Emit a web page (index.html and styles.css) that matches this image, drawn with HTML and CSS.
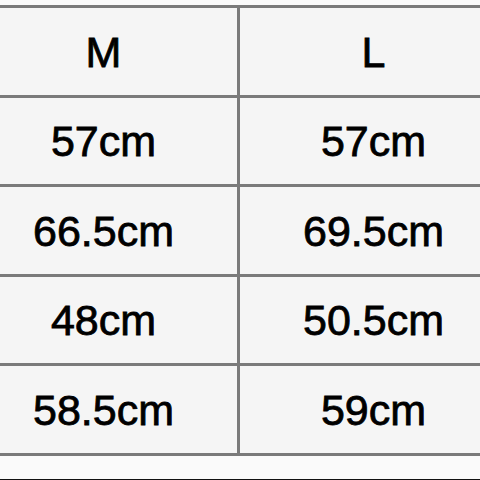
FILE: index.html
```html
<!DOCTYPE html>
<html>
<head>
<meta charset="utf-8">
<link rel="stylesheet" href="styles.css">
</head>
<body>
<div class="page">
  <div class="size-table">
    <div class="cell">M</div><div class="cell">L</div>
    <div class="cell">57cm</div><div class="cell">57cm</div>
    <div class="cell">66.5cm</div><div class="cell">69.5cm</div>
    <div class="cell">48cm</div><div class="cell">50.5cm</div>
    <div class="cell">58.5cm</div><div class="cell">59cm</div>
  </div>
</div>
</body>
</html>
```
FILE: styles.css
```css
html, body {
  margin: 0;
  padding: 0;
  background: #fafafa;
  overflow: hidden;
}
.page {
  width: 480px;
  height: 480px;
  box-sizing: border-box;
  border-bottom: 1px solid #111;
  padding-top: 5px;
  overflow: hidden;
  background: #fafafa;
}
.size-table {
  display: grid;
  grid-template-columns: 267px 267px;
  grid-auto-rows: 86.5px;
  gap: 3px;
  padding: 3px;
  margin-left: -33px;
  width: max-content;
  background: #7a7a7a;
}
.cell {
  background: #f5f5f5;
  display: flex;
  align-items: center;
  justify-content: center;
  font-family: "Liberation Sans", Arial, sans-serif;
  font-size: 43px;
  color: #000;
  -webkit-text-stroke: 0.8px #000;
  padding-top: 2px;
  box-sizing: border-box;
}
```
